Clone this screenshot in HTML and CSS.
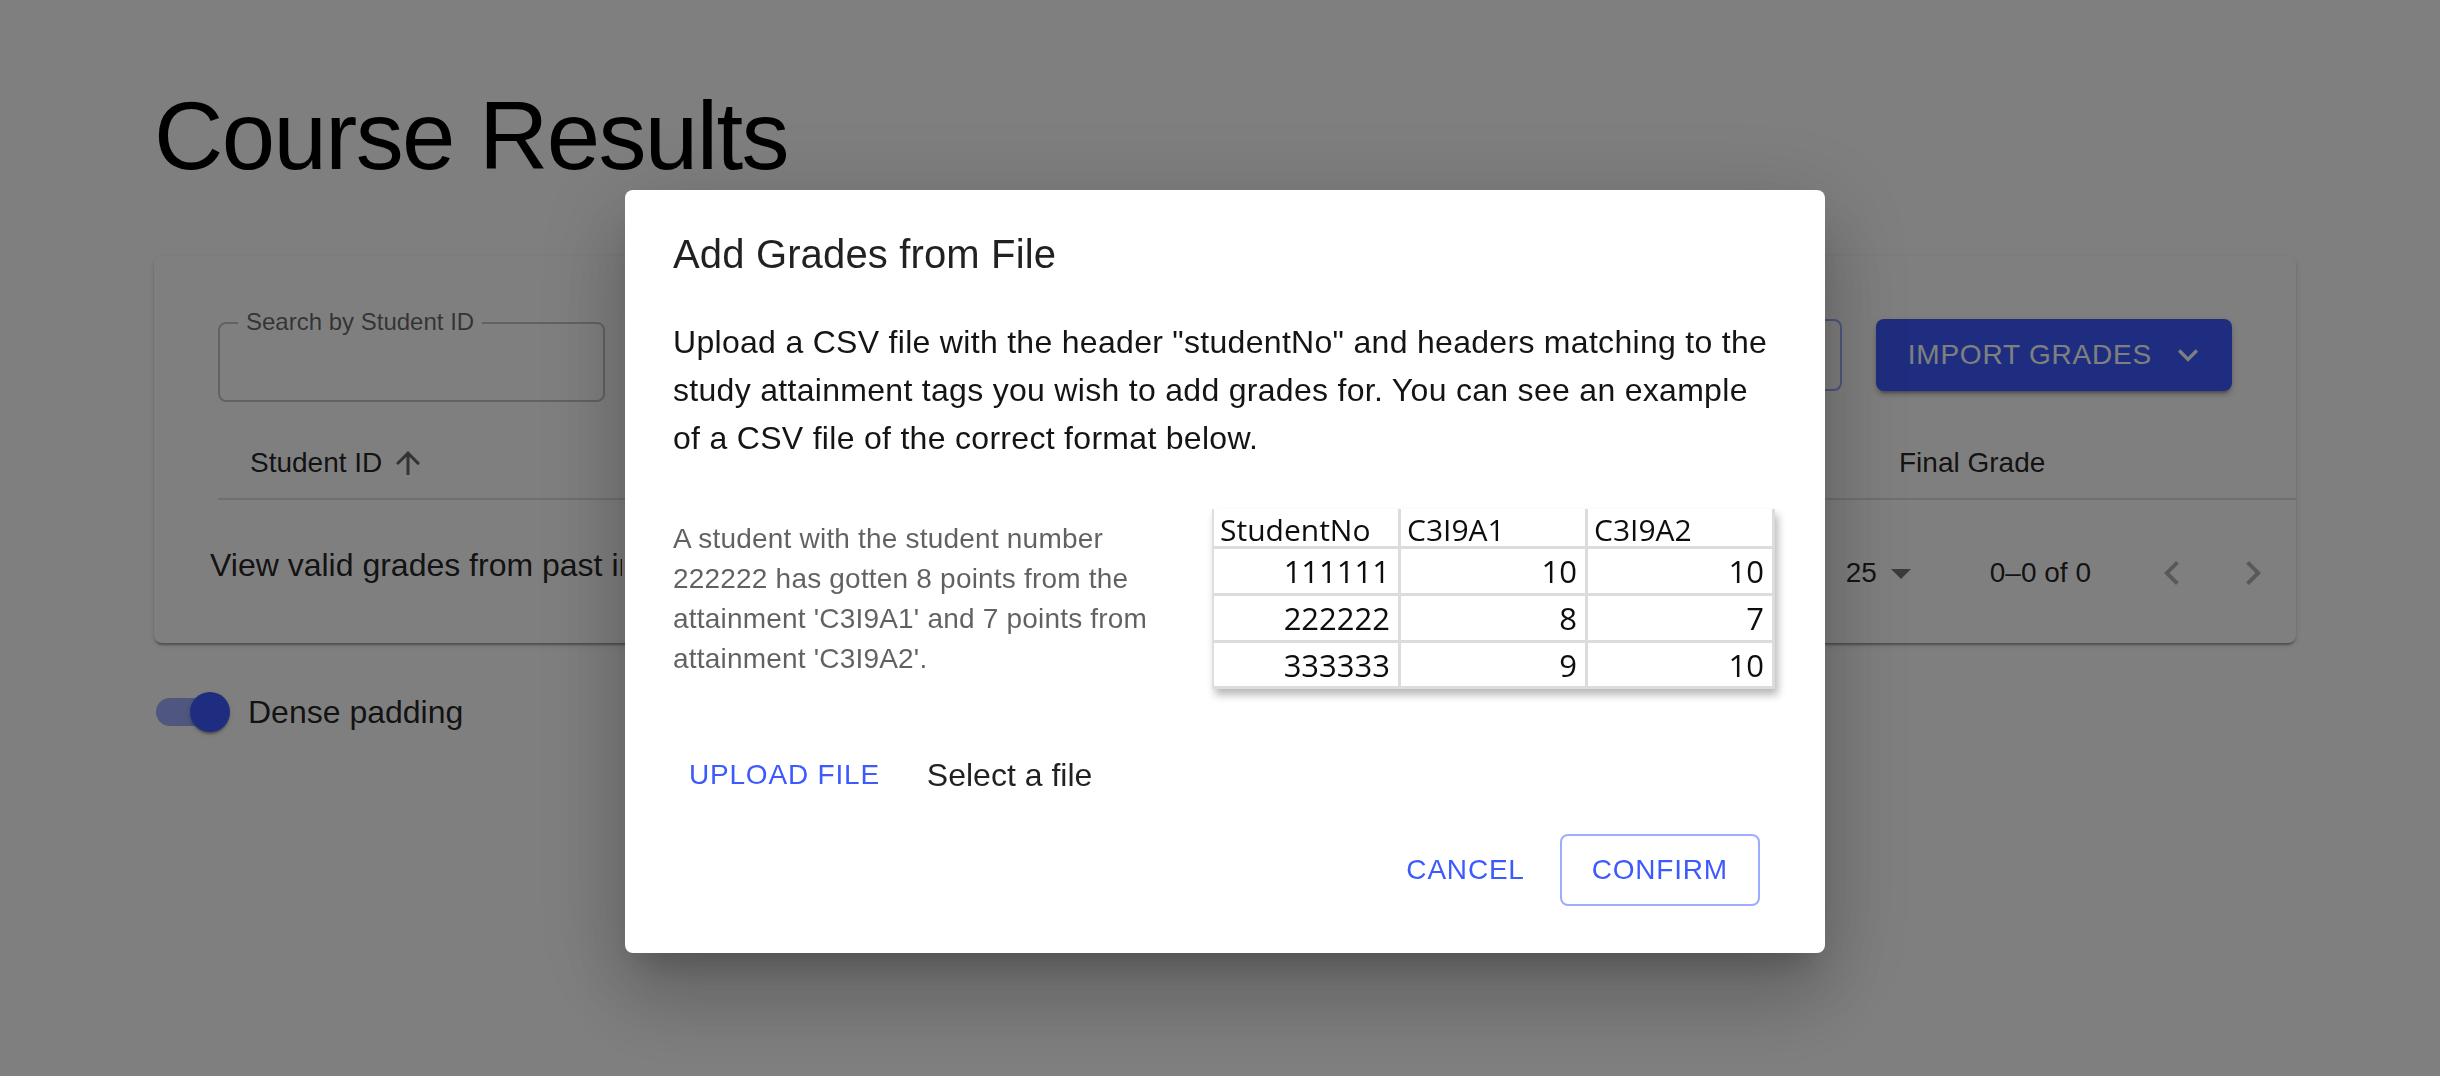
FILE: index.html
```html
<!DOCTYPE html>
<html lang="en">
<head>
<meta charset="utf-8">
<title>Course Results</title>
<link rel="stylesheet" href="styles.css">
</head>
<body>
<div class="page">
  <h1 class="title">Course Results</h1>
  <div class="paper">
    <div class="toolbar">
      <div class="search"><span class="search-label">Search by Student ID</span></div>
      <div class="toolbar-actions">
        <button class="btn-outlined-bg" aria-label="Add grades manually"></button>
        <button class="btn-import">IMPORT GRADES
          <svg class="icon-expand" viewBox="0 0 24 24"><path d="M7.41 8.59 12 13.17l4.59-4.58L18 10l-6 6-6-6 1.41-1.41z"/></svg>
        </button>
      </div>
    </div>
    <div class="thead">
      <div class="th th-id">Student ID
        <svg class="icon-sort" viewBox="0 0 24 24"><path d="M4 12l1.41 1.41L11 7.83V20h2V7.83l5.58 5.59L20 12l-8-8-8 8z"/></svg>
      </div>
      <div class="th th-final">Final Grade</div>
    </div>
    <div class="tfoot">
      <div class="past">View valid grades from past instances</div>
      <div class="pagination">
        <span class="rpp">25</span>
        <svg class="icon-caret" viewBox="0 0 24 24"><path d="M7 10l5 5 5-5z"/></svg>
        <span class="range">0–0 of 0</span>
        <svg class="icon-prev" viewBox="0 0 24 24"><path d="M15.41 16.59 10.83 12l4.58-4.59L14 6l-6 6 6 6 1.41-1.41z"/></svg>
        <svg class="icon-next" viewBox="0 0 24 24"><path d="M8.59 16.59 13.17 12 8.59 7.41 10 6l6 6-6 6-1.41-1.41z"/></svg>
      </div>
    </div>
  </div>
  <div class="dense">
    <span class="switch"><span class="switch-track"></span><span class="switch-thumb"></span></span>
    <span class="dense-text">Dense padding</span>
  </div>
</div>

<div class="backdrop"></div>

<div class="dialog-layer">
  <div class="dialog">
    <h2 class="dialog-title">Add Grades from File</h2>
    <div class="dialog-content">
      <p class="dialog-text">Upload a CSV file with the header "studentNo" and headers matching to the study attainment tags you wish to add grades for. You can see an example of a CSV file of the correct format below.</p>
      <div class="example">
        <p class="example-text">A student with the student number 222222 has gotten 8 points from the attainment 'C3I9A1' and 7 points from attainment 'C3I9A2'.</p>
        <div class="csv">
          <div class="csv-row csv-head"><span>StudentNo</span><span>C3I9A1</span><span>C3I9A2</span></div>
          <div class="csv-row"><span>111111</span><span>10</span><span>10</span></div>
          <div class="csv-row"><span>222222</span><span>8</span><span>7</span></div>
          <div class="csv-row csv-last"><span>333333</span><span>9</span><span>10</span></div>
        </div>
      </div>
      <div class="upload">
        <button class="btn-text">UPLOAD FILE</button>
        <span class="file-name">Select a file</span>
      </div>
    </div>
    <div class="dialog-actions">
      <button class="btn-text">CANCEL</button>
      <button class="btn-outlined">CONFIRM</button>
    </div>
  </div>
</div>
</body>
</html>
```

FILE: styles.css
```css
* { box-sizing: border-box; }
html, body { margin: 0; padding: 0; }
body {
  width: 2440px;
  height: 1076px;
  overflow: hidden;
  background: #fff;
  font-family: "Liberation Sans", Arial, sans-serif;
  color: rgba(0,0,0,0.87);
  position: relative;
}
button {
  font-family: "Liberation Sans", Arial, sans-serif;
  border: none;
  background: none;
  margin: 0;
  cursor: pointer;
}

.page { padding: 80px 144px 0 154px; }
.title {
  margin: 0 0 64px;
  font-size: 96px;
  font-weight: 400;
  line-height: 112px;
  letter-spacing: -1.6px;
  color: #000;
}

.paper {
  background: #fff;
  border-radius: 8px;
  box-shadow: 0 4px 2px -2px rgba(0,0,0,.2), 0 2px 2px 0 rgba(0,0,0,.14), 0 2px 6px 0 rgba(0,0,0,.12);
  padding: 63px 64px 0;
  height: 387px;
}
.toolbar { display: flex; justify-content: space-between; align-items: flex-start; }
.search {
  position: relative;
  width: 387px;
  height: 80px;
  margin-top: 3px;
  border: 2px solid rgba(0,0,0,0.23);
  border-radius: 8px;
}
.search-label {
  position: absolute;
  left: 18px;
  top: -16px;
  padding: 0 8px;
  background: #fff;
  font-size: 24px;
  line-height: 28px;
  color: rgba(0,0,0,0.6);
}
.toolbar-actions { display: flex; gap: 34px; }
.btn-outlined-bg {
  height: 72px;
  width: 320px;
  border: 2px solid rgba(61,90,254,0.5);
  border-radius: 8px;
}
.btn-import {
  display: flex;
  align-items: center;
  height: 72px;
  padding: 0 32px;
  background: #3d5afe;
  color: #fff;
  border-radius: 8px;
  font-size: 28px;
  letter-spacing: 0.8px;
  box-shadow: 0 6px 2px -4px rgba(0,0,0,.2), 0 4px 4px 0 rgba(0,0,0,.14), 0 2px 10px 0 rgba(0,0,0,.12);
}
.icon-expand { width: 40px; height: 40px; margin-left: 16px; margin-right: -8px; fill: #fff; }

.thead {
  display: flex;
  margin-top: 28px;
  margin-right: -64px;
  border-bottom: 2px solid #e0e0e0;
}
.th {
  padding: 11px 32px 13px;
  font-size: 28px;
  line-height: 44px;
  color: rgba(0,0,0,0.87);
}
.th-id { flex: 1; display: flex; align-items: center; }
.icon-sort { width: 36px; height: 36px; margin-left: 8px; fill: rgba(0,0,0,0.6); }
.th-final { width: 429px; }

.tfoot {
  display: flex;
  justify-content: space-between;
  align-items: flex-start;
  height: 143px;
  padding-top: 41px;
  margin-left: -8px;
  margin-right: -45px;
}
.past {
  width: 412px;
  overflow: hidden;
  white-space: nowrap;
  font-size: 32px;
  line-height: 48px;
}
.pagination {
  display: flex;
  align-items: center;
  height: 48px;
  margin-top: 8px;
  font-size: 28px;
}
.rpp { line-height: 40px; }
.icon-caret { width: 48px; height: 48px; fill: rgba(0,0,0,0.54); }
.range { margin-left: 65px; line-height: 40px; }
.icon-prev { width: 48px; height: 48px; margin-left: 57px; fill: rgba(0,0,0,0.3); }
.icon-next { width: 48px; height: 48px; margin-left: 33px; fill: rgba(0,0,0,0.3); }

.dense {
  display: flex;
  align-items: center;
  margin-top: 31px;
  margin-left: -22px;
}
.switch {
  position: relative;
  display: block;
  width: 116px;
  height: 76px;
  padding: 24px;
}
.switch-track {
  display: block;
  width: 68px;
  height: 28px;
  border-radius: 14px;
  background: #3d5afe;
  opacity: 0.5;
}
.switch-thumb {
  position: absolute;
  left: 58px;
  top: 18px;
  width: 40px;
  height: 40px;
  border-radius: 50%;
  background: #3d5afe;
  box-shadow: 0 4px 2px -2px rgba(0,0,0,.2), 0 2px 2px 0 rgba(0,0,0,.14), 0 2px 6px 0 rgba(0,0,0,.12);
}
.dense-text { font-size: 32px; line-height: 48px; }

.backdrop {
  position: fixed;
  inset: 0;
  background: rgba(0,0,0,0.5);
}

.dialog-layer {
  position: fixed;
  inset: 0;
  padding: 190px 0 0 625px;
}
.dialog {
  width: 1200px;
  background: #fff;
  border-radius: 8px;
  box-shadow: 0 22px 30px -14px rgba(0,0,0,.2), 0 48px 76px 6px rgba(0,0,0,.14), 0 18px 92px 16px rgba(0,0,0,.12);
}
.dialog-title {
  margin: 0;
  padding: 32px 48px;
  font-size: 40px;
  line-height: 64px;
  font-weight: 400;
  letter-spacing: 0.15px;
  color: rgba(0,0,0,0.87);
}
.dialog-content { padding: 0 48px; }
.dialog-text {
  margin: 0;
  font-size: 32px;
  line-height: 48px;
  letter-spacing: 0.3px;
  color: rgba(0,0,0,0.92);
}
.example {
  display: flex;
  align-items: center;
  justify-content: space-between;
  margin-top: 47px;
}
.example-text {
  margin: 0;
  width: 500px;
  font-size: 28px;
  line-height: 40px;
  letter-spacing: 0.2px;
  color: rgba(0,0,0,0.62);
}
.csv {
  width: 563px;
  margin-right: 2px;
  background: #fff;
  border-left: 2px solid #dedede;
  box-shadow: 3px 6px 8px rgba(0,0,0,0.28);
  font-family: "Open Sans", "Liberation Sans", sans-serif;
  font-size: 31px;
  color: #0d0d0d;
}
.csv-row {
  display: grid;
  grid-template-columns: 187px 187px 1fr;
  height: 47px;
  border-bottom: 3px solid #dcdcdc;
}
.csv-head { height: 40px; font-size: 30px; }
.csv-last { height: 46px; }
.csv-row span {
  display: flex;
  align-items: center;
  justify-content: flex-end;
  padding: 0 8px;
  border-right: 3px solid #dcdcdc;
}
.csv-head span { justify-content: flex-start; padding: 0 6px; }

.upload { display: flex; align-items: center; margin-top: 49px; }
.btn-text {
  padding: 12px 16px;
  font-size: 28px;
  line-height: 49px;
  letter-spacing: 0.8px;
  color: #3d5afe;
  border-radius: 8px;
}
.file-name { margin-left: 31px; font-size: 32px; line-height: 48px; color: rgba(0,0,0,0.87); }

.dialog-actions {
  display: flex;
  justify-content: flex-end;
  align-items: center;
  gap: 19px;
  padding: 23px 65px 47px;
}
.dialog-actions .btn-text { line-height: 48px; }
.btn-outlined {
  padding: 10px 30px;
  font-size: 28px;
  line-height: 48px;
  letter-spacing: 0.8px;
  color: #3d5afe;
  border: 2px solid rgba(61,90,254,0.5);
  border-radius: 8px;
}
```
